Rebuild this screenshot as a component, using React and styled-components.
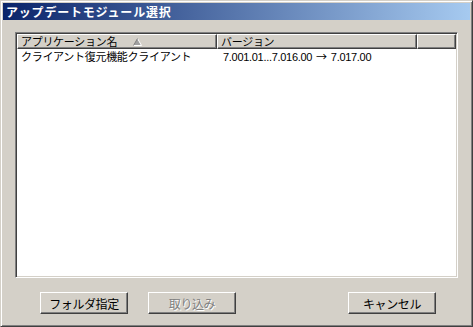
import React from 'react';
import styled, { createGlobalStyle } from 'styled-components';

const GlobalStyle = createGlobalStyle`
  html, body {
    margin: 0;
    padding: 0;
    background: #d4d0c8;
  }
  * {
    box-sizing: border-box;
  }
`;

const Window = styled.div`
  width: 473px;
  height: 327px;
  display: flex;
  flex-direction: column;
  background: #d4d0c8;
  border: 1px solid;
  border-color: #d4d0c8 #404040 #404040 #d4d0c8;
  box-shadow: inset 1px 1px #ffffff, inset -1px -1px #808080;
  padding: 2px;
  font-family: "Noto Sans CJK JP", "Noto Sans", sans-serif;
`;

const TitleBar = styled.div`
  height: 17px;
  display: flex;
  align-items: center;
  padding-left: 3px;
  background: linear-gradient(to right, #0a246a, #a6caf0);
  color: #ffffff;
  font-size: 12px;
  font-weight: bold;
  letter-spacing: 0.8px;
  white-space: nowrap;
`;

const ListBox = styled.div`
  margin: 12px 0 0 12px;
  width: 443px;
  height: 246px;
  display: flex;
  flex-direction: column;
  background: #ffffff;
  border: 1px solid;
  border-color: #808080 #ffffff #ffffff #808080;
  box-shadow: inset 1px 1px #404040, inset -1px -1px #d4d0c8;
  padding: 1px;
`;

const HeaderRow = styled.div`
  display: grid;
  grid-template-columns: 200px 200px 1fr;
  height: 15px;
`;

const HeaderCell = styled.div`
  display: flex;
  align-items: center;
  gap: 16px;
  padding-left: 3px;
  background: #d4d0c8;
  border: 1px solid;
  border-color: #ffffff #404040 #404040 #ffffff;
  box-shadow: inset -1px -1px #808080;
  font-size: 11px;
  letter-spacing: -0.3px;
  color: #000000;
  white-space: nowrap;
  line-height: 1;
  overflow: hidden;
`;

const SortArrow = styled.svg`
  width: 9px;
  height: 8px;
  display: block;
`;

const DataRow = styled.div`
  display: grid;
  grid-template-columns: 200px 200px 1fr;
  height: 13px;
  margin-top: 1px;
  align-items: center;
  font-size: 11px;
  color: #000000;
  white-space: nowrap;
`;

const DataCell = styled.div`
  padding-left: ${({ $pad }) => $pad || 4}px;
  letter-spacing: ${({ $ls }) => $ls || '-0.3px'};
  font-family: ${({ $latin }) => ($latin ? '"Liberation Sans", "Noto Sans CJK JP", sans-serif' : 'inherit')};
  line-height: 1;
`;

const Arrow = styled.span`
  font-family: "Noto Sans CJK JP", sans-serif;
  font-size: 11px;
  margin: 0 4px;
`;

const ButtonRow = styled.div`
  display: flex;
  gap: 20px;
  margin-top: 14px;
  padding: 0 34px 0 37px;
`;

const Button = styled.button`
  width: 88px;
  height: 22px;
  margin-left: ${({ $push }) => ($push ? 'auto' : '0')};
  display: flex;
  align-items: center;
  justify-content: center;
  padding: 0;
  background: #d4d0c8;
  border: 1px solid;
  border-color: #ffffff #404040 #404040 #ffffff;
  box-shadow: inset -1px -1px #808080;
  font-family: "Noto Sans CJK JP", "Noto Sans", sans-serif;
  font-size: 12px;
  letter-spacing: -0.4px;
  color: ${({ disabled }) => (disabled ? '#808080' : '#000000')};
  text-shadow: ${({ disabled }) => (disabled ? '1px 1px #ffffff' : 'none')};
`;

export default function App() {
  return (
    <>
      <GlobalStyle />
      <Window>
        <TitleBar>アップデートモジュール選択</TitleBar>
        <ListBox>
          <HeaderRow>
            <HeaderCell>
              アプリケーション名
              <SortArrow viewBox="0 0 9 8">
                <path d="M4.5 0.5 L8.5 7.5 L0.5 7.5 Z" fill="#a0a0a0" />
                <path d="M4.5 0.5 L8.5 7.5" stroke="#ffffff" strokeWidth="1" />
                <path d="M0.5 7.5 L8.5 7.5" stroke="#ffffff" strokeWidth="1" />
                <path d="M4.5 0.5 L0.5 7.5" stroke="#808080" strokeWidth="1" />
              </SortArrow>
            </HeaderCell>
            <HeaderCell>バージョン</HeaderCell>
            <HeaderCell />
          </HeaderRow>
          <DataRow>
            <DataCell>クライアント復元機能クライアント</DataCell>
            <DataCell $pad={6} $latin $ls="-0.3px">
              7.001.01...7.016.00<Arrow>→</Arrow>7.017.00
            </DataCell>
            <DataCell />
          </DataRow>
        </ListBox>
        <ButtonRow>
          <Button>フォルダ指定</Button>
          <Button disabled>取り込み</Button>
          <Button $push>キャンセル</Button>
        </ButtonRow>
      </Window>
    </>
  );
}
